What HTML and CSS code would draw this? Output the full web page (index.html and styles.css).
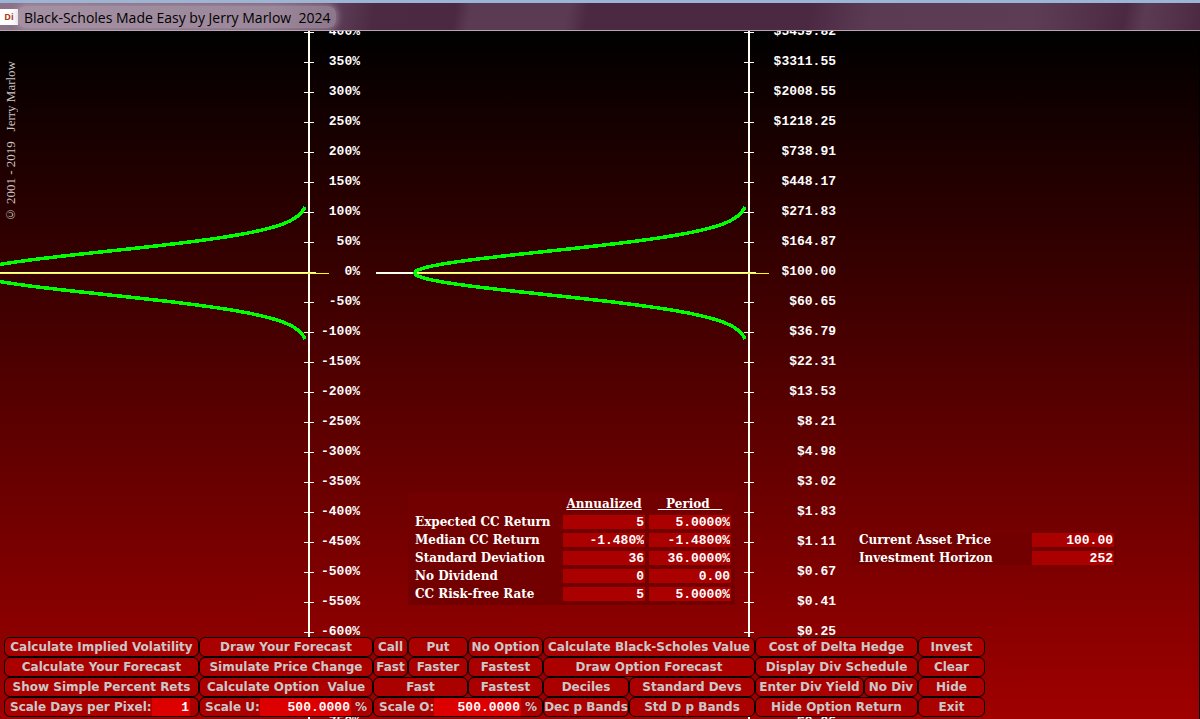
FILE: index.html
```html
<html>
  <head>
    <meta charset="utf-8">
    <title>Black-Scholes Made Easy</title>
    <link rel="stylesheet" href="styles.css">
  </head>
  <body>
    <header class="titlebar">
      <span class="app-icon">Di</span>
      <h1>Black-Scholes Made Easy by Jerry Marlow&nbsp; 2024</h1>
    </header>

    <main class="stage">
      <p class="copyright">© 2001 - 2019&nbsp;&nbsp; Jerry Marlow</p>

      <section class="plot returns">
        <svg class="chart" width="316" height="700">
          <g class="ticks"></g>
          <rect class="axis" x="308" y="0" width="2" height="700" />
          <rect class="axis" x="0" y="241" width="316" height="1" />
          <rect class="zero" x="0" y="242" width="329" height="1" />
          <polyline class="curve" data-base="308" />
        </svg>
        <ol class="scale">
          <li>400%</li>
          <li>350%</li>
          <li>300%</li>
          <li>250%</li>
          <li>200%</li>
          <li>150%</li>
          <li>100%</li>
          <li>50%</li>
          <li>0%</li>
          <li>-50%</li>
          <li>-100%</li>
          <li>-150%</li>
          <li>-200%</li>
          <li>-250%</li>
          <li>-300%</li>
          <li>-350%</li>
          <li>-400%</li>
          <li>-450%</li>
          <li>-500%</li>
          <li>-550%</li>
          <li>-600%</li>
          <li></li>
          <li></li>
          <li>-750%</li>
        </ol>
      </section>

      <section class="plot prices">
        <svg class="chart" width="380" height="700">
          <g class="ticks"></g>
          <rect class="axis" x="372" y="0" width="2" height="700" />
          <rect class="axis" x="0" y="241" width="380" height="1" />
          <rect class="axis" x="0" y="242" width="40" height="1" />
          <rect class="zero" x="40" y="242" width="353" height="1" />
          <polyline class="curve" data-base="372" />
        </svg>
        <ol class="scale">
          <li>$5459.82</li>
          <li>$3311.55</li>
          <li>$2008.55</li>
          <li>$1218.25</li>
          <li>$738.91</li>
          <li>$448.17</li>
          <li>$271.83</li>
          <li>$164.87</li>
          <li>$100.00</li>
          <li>$60.65</li>
          <li>$36.79</li>
          <li>$22.31</li>
          <li>$13.53</li>
          <li>$8.21</li>
          <li>$4.98</li>
          <li>$3.02</li>
          <li>$1.83</li>
          <li>$1.11</li>
          <li>$0.67</li>
          <li>$0.41</li>
          <li>$0.25</li>
          <li></li>
          <li></li>
          <li>$0.06</li>
        </ol>
      </section>

      <table class="panel rates">
        <tr>
          <td></td>
          <th scope="col">Annualized</th>
          <th scope="col">&nbsp;&nbsp;Period&nbsp;&nbsp;&nbsp;</th>
        </tr>
        <tr>
          <th scope="row" id="expected">Expected CC Return</th>
          <td><input aria-labelledby="expected" value="5"></td>
          <td><input aria-labelledby="expected" value="5.0000%"></td>
        </tr>
        <tr>
          <th scope="row" id="median">Median CC Return</th>
          <td><input aria-labelledby="median" value="-1.480%"></td>
          <td><input aria-labelledby="median" value="-1.4800%"></td>
        </tr>
        <tr>
          <th scope="row" id="deviation">Standard Deviation</th>
          <td><input aria-labelledby="deviation" value="36"></td>
          <td><input aria-labelledby="deviation" value="36.0000%"></td>
        </tr>
        <tr>
          <th scope="row" id="dividend">No Dividend</th>
          <td><input aria-labelledby="dividend" value="0"></td>
          <td><input aria-labelledby="dividend" value="0.00"></td>
        </tr>
        <tr>
          <th scope="row" id="riskfree">CC Risk-free Rate</th>
          <td><input aria-labelledby="riskfree" value="5"></td>
          <td><input aria-labelledby="riskfree" value="5.0000%"></td>
        </tr>
      </table>

      <div class="panel asset">
        <label for="price">Current Asset Price</label>
        <input id="price" value="100.00">
        <label for="horizon">Investment Horizon</label>
        <input id="horizon" value="252">
      </div>

      <div class="controls">
        <button>Calculate Implied Volatility</button>
        <button>Draw Your Forecast</button>
        <button>Call</button>
        <button>Put</button>
        <button>No Option</button>
        <button class="span2">Calculate Black-Scholes Value</button>
        <button class="span2">Cost of Delta Hedge</button>
        <button>Invest</button>

        <button>Calculate Your Forecast</button>
        <button>Simulate Price Change</button>
        <button>Fast</button>
        <button>Faster</button>
        <button>Fastest</button>
        <button class="span2">Draw Option Forecast</button>
        <button class="span2">Display Div Schedule</button>
        <button>Clear</button>

        <button>Show Simple Percent Rets</button>
        <button>Calculate Option&nbsp; Value</button>
        <button class="span2">Fast</button>
        <button>Fastest</button>
        <button>Deciles</button>
        <button>Standard Devs</button>
        <button>Enter Div Yield</button>
        <button>No Div</button>
        <button>Hide</button>

        <div class="field days">
          <label for="days">Scale Days per Pixel:</label>
          <input id="days" value="1">
        </div>
        <div class="field">
          <label for="scale-u">Scale U:</label>
          <input id="scale-u" value="500.0000">
          <span>%</span>
        </div>
        <div class="field span3">
          <label for="scale-o">Scale O:</label>
          <input id="scale-o" value="500.0000">
          <span>%</span>
        </div>
        <button>Dec p Bands</button>
        <button>Std D p Bands</button>
        <button class="span2">Hide Option Return</button>
        <button>Exit</button>
      </div>
    </main>

    <script src="script.js"></script>
  </body>
</html>
```

FILE: styles.css
```css
* {
  box-sizing: border-box;
}

body {
  margin: 0;
  height: 100vh;
  display: flex;
  flex-direction: column;
  overflow: hidden;
  background: #000;
}

input {
  min-width: 0;
  border: none;
  padding: 0 1px;
  color: #fff;
  text-align: right;
  font: bold 13px "Liberation Mono", monospace;
}

.titlebar {
  height: 31px;
  display: flex;
  align-items: center;
  border-top: 3px solid #9bb5d6;
  border-bottom: 1px solid #b9a3b4;
  background: linear-gradient(100deg, #8d7389 0, #7a5f78 270px, #4c2a44 370px, #4c2943 450px, #5b3b53 465px, #5b3b53 560px, #4c2943 580px, #4c2943 800px, #5b3b53 860px, #5d3d55 1020px, #4c2943 1110px, #5b3b53 1130px, #4c2943 100%);
}

.app-icon {
  width: 18px;
  height: 16px;
  background: #fff;
  color: #b03a1c;
  font: bold 9px/16px "Open Sans", sans-serif;
  text-align: center;
}

.titlebar h1 {
  margin: 0;
  padding: 2px 6px 0;
  color: #000;
  font: 14px/20px "Open Sans", sans-serif;
  border-radius: 8px;
  background: rgba(190, 175, 190, 0.5);
  box-shadow: 0 0 6px 2px rgba(190, 175, 190, 0.5);
}

.stage {
  position: relative;
  flex: 1;
  min-height: 0;
  display: flex;
  overflow: hidden;
  border-right: 1px solid #000;
  background: linear-gradient(#000, #a00000);
}

.copyright {
  position: absolute;
  left: 4px;
  top: 30px;
  margin: 0;
  color: #c8c8c8;
  font: 13px/14px "Liberation Serif", serif;
  writing-mode: vertical-rl;
  transform: rotate(180deg);
}

.plot {
  display: flex;
  flex: none;
}

.returns {
  width: 376px;
}

.prices {
  width: 460px;
}

.chart {
  flex: none;
  overflow: visible;
  shape-rendering: crispEdges;
}

.axis {
  fill: #fffff0;
}

.zero {
  fill: #ffff00;
}

.curve {
  fill: none;
  stroke: #00ff00;
  stroke-width: 3.5;
}

.scale {
  flex: 1;
  margin: -14px 0 0;
  padding: 0;
  list-style: none;
  color: #fff;
  text-align: right;
  font: bold 13px/30px "Liberation Mono", monospace;
}

.scale li {
  height: 30px;
}

.returns .scale {
  padding-right: 16px;
}

.panel {
  position: absolute;
  background: #720000;
  color: #fff;
  font: bold 12px/14px "DejaVu Serif", serif;
}

.panel input {
  display: block;
  width: 82px;
  height: 14px;
  background: #aa0000;
}

.rates {
  left: 408px;
  top: 462px;
  width: 327px;
  border-spacing: 4px;
}

.rates td,
.rates th {
  padding: 0;
  height: 14px;
  white-space: nowrap;
}

.rates th[scope="row"] {
  width: 100%;
  padding-left: 3px;
  text-align: left;
}

.rates th[scope="col"] {
  text-decoration: underline;
}

.asset {
  left: 852px;
  top: 502px;
  width: 264px;
  display: grid;
  grid-template-columns: 1fr 82px;
  gap: 4px;
  padding: 0 2px 0 7px;
}

.controls {
  position: absolute;
  left: 4px;
  right: 4px;
  bottom: 2px;
  max-width: 981px;
  display: grid;
  grid-template-columns: 195fr 174fr 35fr 60fr 75fr 86fr 126fr 109fr 54fr 67fr;
  grid-auto-rows: 20px;
}

.controls button,
.field {
  min-width: 0;
  padding: 0;
  border: 1px solid #000;
  border-radius: 6px;
  background: #aa0000;
  color: #c8c8c8;
  font: bold 12px/16px "DejaVu Sans", sans-serif;
  white-space: nowrap;
}

.field {
  display: flex;
  align-items: center;
  padding: 0 5px;
}

.field input {
  flex: 1;
  height: 18px;
  background: #dd0000;
}

.field span {
  margin-left: 4px;
}

.days {
  padding-right: 8px;
}

.span2 {
  grid-column: span 2;
}

.span3 {
  grid-column: span 3;
}
```

FILE: script.js
```js
const SVG = "http://www.w3.org/2000/svg";
const ZERO = 242; // y of the 0% line
const SIGMA = 21.6; // 36% at 0.6px per percent
const PEAK = 333;

document.querySelectorAll(".chart").forEach((chart) => {
  const curve = chart.querySelector(".curve");
  const base = Number(curve.dataset.base);

  // bell curve lying on its side, out to 3 standard deviations
  const points = [];
  for (let y = -66; y <= 66; y++) {
    const x = base - PEAK * Math.exp(-(y * y) / (2 * SIGMA * SIGMA));
    points.push(x.toFixed(1) + "," + (ZERO + y));
  }
  curve.setAttribute("points", points.join(" "));

  const ticks = chart.querySelector(".ticks");
  for (let y = 1; y < 700; y += 30) {
    const tick = document.createElementNS(SVG, "rect");
    tick.setAttribute("class", "axis");
    tick.setAttribute("x", base - 4);
    tick.setAttribute("y", y);
    tick.setAttribute("width", 10);
    tick.setAttribute("height", 1);
    ticks.appendChild(tick);
  }
});
```
